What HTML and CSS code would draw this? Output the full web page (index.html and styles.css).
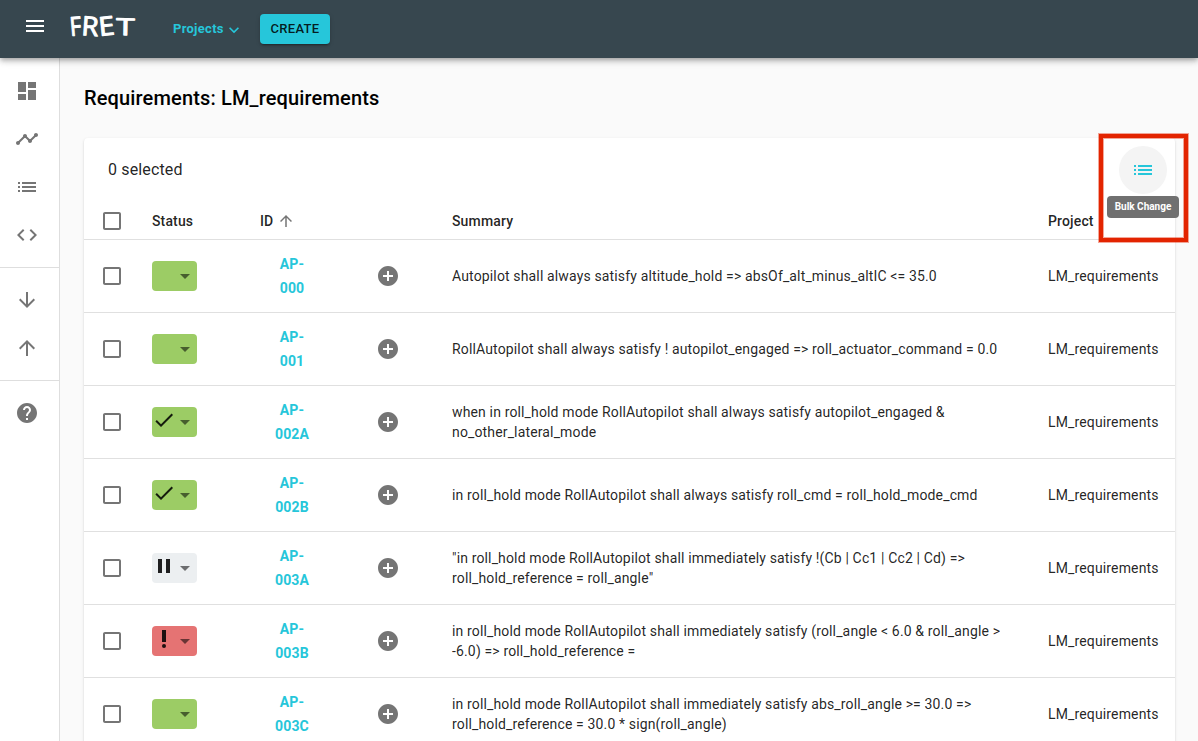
FILE: index.html
```html
<!DOCTYPE html>
<html lang="en">
<head>
<meta charset="utf-8">
<title>FRET</title>
<link rel="stylesheet" href="styles.css">
</head>
<body>
<svg class="defs" aria-hidden="true">
  <symbol id="menu" viewBox="0 0 24 24"><path d="M3 18h18v-2H3v2zm0-5h18v-2H3v2zm0-7v2h18V6H3z"/></symbol>
  <symbol id="dashboard" viewBox="0 0 24 24"><path d="M3 13h8V3H3v10zm0 8h8v-6H3v6zm10 0h8V11h-8v10zm0-18v6h8V3h-8z"/></symbol>
  <symbol id="timeline" viewBox="0 0 24 24"><path d="M23 8c0 1.1-.9 2-2 2-.18 0-.35-.02-.51-.07l-3.56 3.55c.05.16.07.34.07.52 0 1.1-.9 2-2 2s-2-.9-2-2c0-.18.02-.36.07-.52l-2.55-2.55c-.16.05-.34.07-.52.07s-.36-.02-.52-.07l-4.55 4.56c.05.16.07.33.07.51 0 1.1-.9 2-2 2s-2-.9-2-2 .9-2 2-2c.18 0 .35.02.51.07l4.56-4.55C8.02 9.36 8 9.18 8 9c0-1.1.9-2 2-2s2 .9 2 2c0 .18-.02.36-.07.52l2.55 2.55c.16-.05.34-.07.52-.07s.36.02.52.07l3.55-3.56C19.02 8.35 19 8.18 19 8c0-1.1.9-2 2-2s2 .9 2 2z"/></symbol>
  <symbol id="list" viewBox="0 0 24 24"><path d="M3 13h2v-2H3v2zm0 4h2v-2H3v2zm0-8h2V7H3v2zm4 4h14v-2H7v2zm0 4h14v-2H7v2zM7 7v2h14V7H7z"/></symbol>
  <symbol id="code" viewBox="0 0 24 24"><path d="M9.4 16.6L4.8 12l4.6-4.6L8 6l-6 6 6 6 1.4-1.4zm5.2 0l4.6-4.6-4.6-4.6L16 6l6 6-6 6-1.4-1.4z"/></symbol>
  <symbol id="down" viewBox="0 0 24 24"><path d="M20 12l-1.41-1.41L13 16.17V4h-2v12.17l-5.58-5.59L4 12l8 8 8-8z"/></symbol>
  <symbol id="up" viewBox="0 0 24 24"><path d="M4 12l1.41 1.41L11 7.83V20h2V7.83l5.58 5.59L20 12l-8-8-8 8z"/></symbol>
  <symbol id="help" viewBox="0 0 24 24"><path d="M12 2C6.48 2 2 6.48 2 12s4.48 10 10 10 10-4.48 10-10S17.52 2 12 2zm1 17h-2v-2h2v2zm2.07-7.75l-.9.92C13.45 12.9 13 13.5 13 15h-2v-.5c0-1.1.45-2.1 1.17-2.83l1.24-1.26c.37-.36.59-.86.59-1.41 0-1.1-.9-2-2-2s-2 .9-2 2H8c0-2.21 1.79-4 4-4s4 1.79 4 4c0 .88-.36 1.68-.93 2.25z"/></symbol>
  <symbol id="box" viewBox="0 0 24 24"><path d="M19 5v14H5V5h14m0-2H5c-1.1 0-2 .9-2 2v14c0 1.1.9 2 2 2h14c1.1 0 2-.9 2-2V5c0-1.1-.9-2-2-2z"/></symbol>
  <symbol id="add" viewBox="0 0 24 24"><path d="M12 2C6.48 2 2 6.48 2 12s4.48 10 10 10 10-4.48 10-10S17.52 2 12 2zm5 11h-4v4h-2v-4H7v-2h4V7h2v4h4v2z"/></symbol>
  <symbol id="caret" viewBox="0 0 24 24"><path d="M7 10l5 5 5-5z"/></symbol>
  <symbol id="check" viewBox="0 0 24 24"><path d="M9 16.17L4.83 12l-1.42 1.41L9 19 21 7l-1.41-1.41z"/></symbol>
  <symbol id="pause" viewBox="0 0 24 24"><path d="M6 19h4V5H6v14zm8-14v14h4V5h-4z"/></symbol>
  <symbol id="alert" viewBox="0 0 24 24"><circle cx="12" cy="19" r="2"/><path d="M10 3h4v12h-4z"/></symbol>
  <symbol id="chevron" viewBox="0 0 24 24"><path d="M7.41 8.59L12 13.17l4.59-4.58L18 10l-6 6-6-6 1.41-1.41z"/></symbol>
</svg>

<header class="appbar">
  <svg class="icon menu"><use href="#menu"/></svg>
  <svg class="logo" width="72" height="30" viewBox="0 0 72 30">
    <text class="wordmark" transform="translate(3.5 25) rotate(-5) scale(.86 1)">F</text>
    <text class="wordmark" transform="translate(14 24) rotate(4) scale(1.06 1.02)">R</text>
    <text class="wordmark" transform="translate(32.5 25) rotate(-6) scale(1.1 1)">E</text>
    <text class="wordmark" transform="translate(49 24) rotate(1) scale(1.3 .9)">T</text>
  </svg>
  <button class="projects">Projects<svg class="chevron"><use href="#chevron"/></svg></button>
  <button class="create">CREATE</button>
</header>

<div class="body">
  <nav class="sidebar">
    <div class="group">
      <svg class="icon"><use href="#dashboard"/></svg>
      <svg class="icon"><use href="#timeline"/></svg>
      <svg class="icon"><use href="#list"/></svg>
      <svg class="icon"><use href="#code"/></svg>
    </div>
    <div class="group">
      <svg class="icon"><use href="#down"/></svg>
      <svg class="icon"><use href="#up"/></svg>
    </div>
    <div class="group">
      <svg class="icon"><use href="#help"/></svg>
    </div>
  </nav>

  <main class="content">
    <h1 class="title">Requirements: LM_requirements</h1>
    <section class="card">
      <div class="toolbar">
        <span class="selected">0 selected</span>
        <div class="bulk">
          <svg class="icon"><use href="#list"/></svg>
          <span class="tooltip">Bulk Change</span>
          <span class="highlight"></span>
        </div>
      </div>
      <div class="row head">
        <svg class="icon"><use href="#box"/></svg>
        <span>Status</span>
        <span class="sort">ID<svg class="arrow"><use href="#up"/></svg></span>
        <span></span>
        <span>Summary</span>
        <span>Project</span>
      </div>
      <div class="row">
        <svg class="icon"><use href="#box"/></svg>
        <span class="status green"><svg class="caret"><use href="#caret"/></svg></span>
        <a class="id">AP-<br>000</a>
        <svg class="icon"><use href="#add"/></svg>
        <p class="summary">Autopilot shall always satisfy altitude_hold =&gt; absOf_alt_minus_altIC &lt;= 35.0</p>
        <span>LM_requirements</span>
      </div>
      <div class="row">
        <svg class="icon"><use href="#box"/></svg>
        <span class="status green"><svg class="caret"><use href="#caret"/></svg></span>
        <a class="id">AP-<br>001</a>
        <svg class="icon"><use href="#add"/></svg>
        <p class="summary">RollAutopilot shall always satisfy ! autopilot_engaged =&gt; roll_actuator_command = 0.0</p>
        <span>LM_requirements</span>
      </div>
      <div class="row">
        <svg class="icon"><use href="#box"/></svg>
        <span class="status green"><svg class="mark"><use href="#check"/></svg><svg class="caret"><use href="#caret"/></svg></span>
        <a class="id">AP-<br>002A</a>
        <svg class="icon"><use href="#add"/></svg>
        <p class="summary">when in roll_hold mode RollAutopilot shall always satisfy autopilot_engaged &amp;<br>no_other_lateral_mode</p>
        <span>LM_requirements</span>
      </div>
      <div class="row">
        <svg class="icon"><use href="#box"/></svg>
        <span class="status green"><svg class="mark"><use href="#check"/></svg><svg class="caret"><use href="#caret"/></svg></span>
        <a class="id">AP-<br>002B</a>
        <svg class="icon"><use href="#add"/></svg>
        <p class="summary">in roll_hold mode RollAutopilot shall always satisfy roll_cmd = roll_hold_mode_cmd</p>
        <span>LM_requirements</span>
      </div>
      <div class="row">
        <svg class="icon"><use href="#box"/></svg>
        <span class="status grey"><svg class="mark"><use href="#pause"/></svg><svg class="caret"><use href="#caret"/></svg></span>
        <a class="id">AP-<br>003A</a>
        <svg class="icon"><use href="#add"/></svg>
        <p class="summary">"in roll_hold mode RollAutopilot shall immediately satisfy !(Cb | Cc1 | Cc2 | Cd) =&gt;<br>roll_hold_reference = roll_angle"</p>
        <span>LM_requirements</span>
      </div>
      <div class="row">
        <svg class="icon"><use href="#box"/></svg>
        <span class="status red"><svg class="mark"><use href="#alert"/></svg><svg class="caret"><use href="#caret"/></svg></span>
        <a class="id">AP-<br>003B</a>
        <svg class="icon"><use href="#add"/></svg>
        <p class="summary">in roll_hold mode RollAutopilot shall immediately satisfy (roll_angle &lt; 6.0 &amp; roll_angle &gt;<br>-6.0) =&gt; roll_hold_reference =</p>
        <span>LM_requirements</span>
      </div>
      <div class="row">
        <svg class="icon"><use href="#box"/></svg>
        <span class="status green"><svg class="caret"><use href="#caret"/></svg></span>
        <a class="id">AP-<br>003C</a>
        <svg class="icon"><use href="#add"/></svg>
        <p class="summary">in roll_hold mode RollAutopilot shall immediately satisfy abs_roll_angle &gt;= 30.0 =&gt;<br>roll_hold_reference = 30.0 * sign(roll_angle)</p>
        <span>LM_requirements</span>
      </div>
    </section>
  </main>
</div>
</body>
</html>
```

FILE: styles.css
```css
* { box-sizing: border-box; }

body {
  margin: 0;
  height: 741px;
  overflow: hidden;
  background: #fafafa;
  color: rgba(0, 0, 0, 0.87);
  font: 400 14px/20px Roboto, sans-serif;
  letter-spacing: 0.145px;
}

svg { display: block; flex: none; fill: currentColor; }
.defs { display: none; }
.icon { width: 24px; height: 24px; color: #757575; }

.appbar {
  position: relative;
  z-index: 2;
  display: flex;
  align-items: flex-start;
  height: 58px;
  padding-left: 23px;
  background: #37474f;
  box-shadow: 0 2px 4px -1px rgba(0, 0, 0, 0.2), 0 4px 5px rgba(0, 0, 0, 0.14), 0 1px 10px rgba(0, 0, 0, 0.12);
}
.menu { margin-top: 14px; color: #fff; }
.logo { margin: 11px 0 0 20px; overflow: visible; }
.wordmark {
  font: 400 26px "Open Sans", sans-serif;
  letter-spacing: 0;
  fill: #fff;
  stroke: #fff;
  stroke-width: 1px;
  stroke-linejoin: round;
}

button { border: 0; padding: 0; font-family: Roboto, sans-serif; }
.projects {
  display: flex;
  align-items: center;
  width: 87px;
  margin: 19px 0 0 34px;
  background: none;
  color: #26c6da;
  font-size: 13px;
  font-weight: 700;
  line-height: 20px;
  letter-spacing: 0.28px;
}
.chevron { width: 20px; height: 20px; margin: 1px 0 -1px; }
.create {
  width: 70px;
  height: 30px;
  margin-top: 14px;
  padding-bottom: 1px;
  border-radius: 4px;
  background: #26c6da;
  color: rgba(0, 0, 0, 0.87);
  font-size: 13px;
  font-weight: 500;
  letter-spacing: 0.3px;
  box-shadow: 0 3px 1px -2px rgba(0, 0, 0, 0.2), 0 2px 2px rgba(0, 0, 0, 0.14), 0 1px 5px rgba(0, 0, 0, 0.12);
}

.body { display: flex; height: 683px; }
.sidebar { flex: none; width: 60px; background: #fff; border-right: 1px solid #dedede; }
.group { display: grid; gap: 24px; padding: 20px 0 20px 15px; }
.group:first-child { padding-top: 21px; }
.group + .group { border-top: 1px solid #dedede; }

.content { flex: 1; padding: 28px 23px 0 24px; }
.title { margin: 0 0 28px; color: #000; font-size: 20px; font-weight: 500; line-height: 24px; letter-spacing: 0.15px; }
.card {
  height: 640px;
  border-radius: 4px;
  background: #fff;
  box-shadow: 0 2px 1px -1px rgba(0, 0, 0, 0.2), 0 1px 1px rgba(0, 0, 0, 0.14), 0 1px 3px rgba(0, 0, 0, 0.12);
}
.toolbar { display: flex; align-items: center; justify-content: space-between; height: 64px; padding: 0 8px 0 24px; }
.selected { font-size: 16px; line-height: 24px; }
.bulk { position: relative; display: grid; place-items: center; width: 48px; height: 48px; border-radius: 50%; background: #f4f4f4; }
.bulk .icon { color: #26c6da; }
.tooltip {
  position: absolute;
  top: 50px;
  left: -12px;
  width: 72px;
  height: 22px;
  border-radius: 4px;
  background: #707070;
  color: #fff;
  font-size: 10px;
  font-weight: 700;
  line-height: 21px;
  letter-spacing: 0;
  text-align: center;
}
.highlight {
  position: absolute;
  top: -12px;
  left: -20px;
  width: 89px;
  height: 108px;
  border: 4px solid #e32400;
  box-shadow: 0 0 0 1px rgba(227, 36, 0, 0.4), inset 0 0 0 1px rgba(227, 36, 0, 0.4);
}

.row {
  display: grid;
  grid-template-columns: 52px 108px 116px 76px 596px 127px;
  align-items: center;
  height: 73px;
  padding-left: 16px;
  border-bottom: 1px solid #e0e0e0;
  white-space: nowrap;
}
.head { height: 38px; font-weight: 500; line-height: 24px; }
.sort { display: flex; align-items: center; }
.arrow { width: 18px; height: 18px; margin-left: 4px; color: #757575; }
.status { display: flex; align-items: center; width: 45px; height: 30px; border-radius: 4px; }
.green { background: #9ccc65; }
.grey { background: #eceff1; }
.red { background: #e57373; }
.mark { width: 24px; height: 24px; margin: -4px -3px 0 0; }
.caret { width: 24px; height: 24px; margin-left: auto; opacity: 0.62; }
.id { width: 64px; color: #26c6da; font-weight: 700; line-height: 24px; text-align: center; }
.summary { margin: 0; }
```
